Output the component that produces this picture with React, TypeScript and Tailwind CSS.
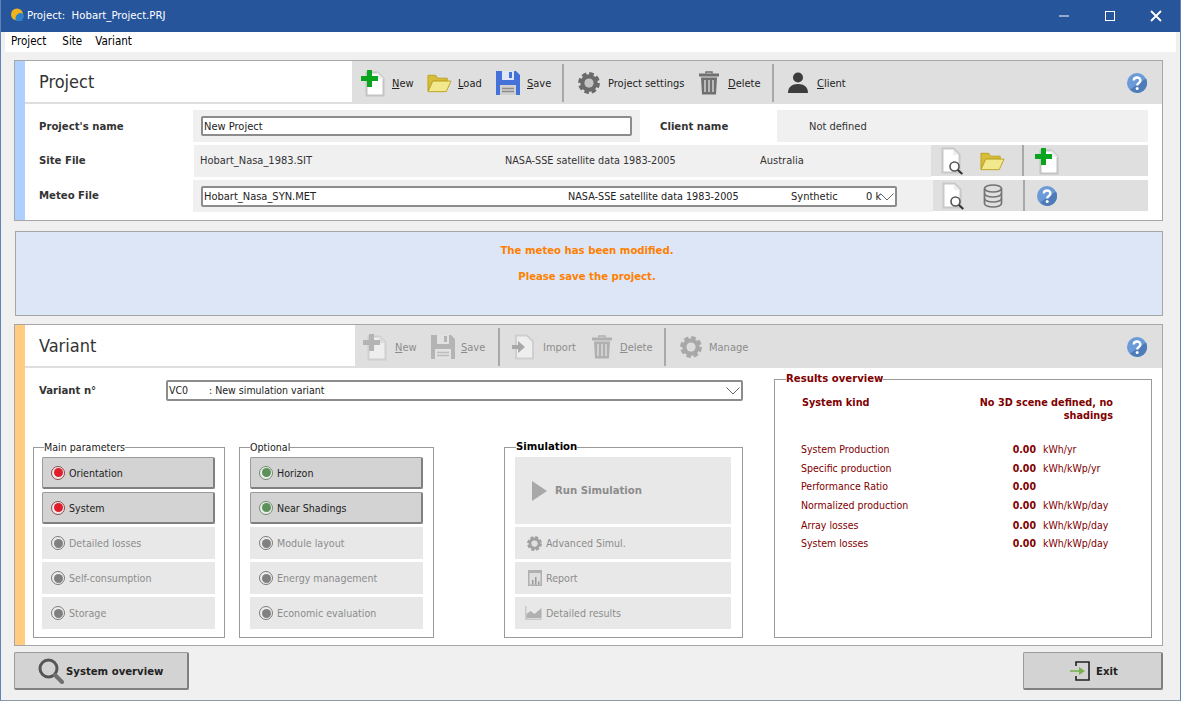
import type { ReactNode } from "react";

const font = "font-['DejaVu_Sans_Condensed','DejaVu_Sans',sans-serif]";

function NewDocIcon({ muted = false }: { muted?: boolean }) {
  const plus = muted ? "#b4b4b4" : "#0aa51e";
  return (
    <svg width="26" height="28" viewBox="0 0 26 28" aria-hidden>
      <path d="M5.500 3.500h11l6 6v17h-17z" fill={muted ? "#eeeeee" : "#ffffff"} stroke={muted ? "#cfcfcf" : "#c4c4c4"} strokeWidth="2" />
      <path d="M16 3v7h7" fill={muted ? "#dcdcdc" : "#eeeeee"} />
      <path d="M6 1h5v6h6v5h-6v6H6v-6H0V7h6z" fill={plus} />
    </svg>
  );
}

function FolderIcon() {
  return (
    <svg width="25" height="20" viewBox="0 0 26 20" aria-hidden>
      <path d="M1 18V2h8l2 3h10v3H6L1 18z" fill="#d8bd3a" stroke="#bda21f" />
      <path d="M1 19l5-11h19l-5 11z" fill="#f2e88e" stroke="#bda21f" />
    </svg>
  );
}

function SaveIcon({ muted = false }: { muted?: boolean }) {
  return (
    <svg width="26" height="28" viewBox="0 0 26 28" aria-hidden>
      <path d="M1 2h20l4 4v20H1z" fill={muted ? "#b4b4b4" : "#4472d8"} />
      <rect x="7" y="2" width="12" height="9" fill={muted ? "#e2e2e2" : "#dfe6f7"} />
      <rect x="14" y="3" width="3" height="6" fill={muted ? "#b4b4b4" : "#4472d8"} />
      <rect x="5" y="16" width="16" height="10" fill={muted ? "#e2e2e2" : "#d0d0d0"} />
      <path d="M7 19.500h12M7 22.500h12" stroke={muted ? "#bcbcbc" : "#8c8c8c"} strokeWidth="1.400" />
    </svg>
  );
}

function GearIcon({ size = 22, color = "#6a6a6a", hole = "#c4c4c4" }: { size?: number; color?: string; hole?: string }) {
  return (
    <svg width={size} height={size} viewBox="0 0 24 24" aria-hidden>
      <circle cx="12" cy="12" r="10.200" fill="none" stroke={color} strokeWidth="3.400" strokeDasharray="5 3" />
      <circle cx="12" cy="12" r="7" fill="none" stroke={color} strokeWidth="5" />
      <circle cx="12" cy="12" r="5" fill={hole} />
    </svg>
  );
}

function TrashIcon({ muted = false }: { muted?: boolean }) {
  const c = muted ? "#b0b0b0" : "#707070";
  return (
    <svg width="20" height="24" viewBox="0 0 20 24" aria-hidden>
      <path d="M7 2.500V1h6v1.500" fill="none" stroke={c} strokeWidth="1.500" />
      <rect x="0" y="2.500" width="20" height="3" fill={c} />
      <path d="M2 6.500h16l-1 17H3z" fill={c} />
      <path d="M6 9v12M10 9v12M14 9v12" stroke="#e2e2e2" strokeWidth="1.300" />
    </svg>
  );
}

function PersonIcon() {
  return (
    <svg width="22" height="22" viewBox="0 0 22 22" aria-hidden>
      <circle cx="11" cy="5.500" r="5" fill="#3c3c3c" />
      <path d="M1 21c0-6 4-9 10-9s10 3 10 9z" fill="#3c3c3c" />
    </svg>
  );
}

function HelpIcon() {
  return (
    <svg width="20" height="20" viewBox="0 0 20 20" aria-hidden>
      <circle cx="10" cy="10" r="10" fill="#6a9ad8" />
      <path d="M10 20A10 10 0 0 0 19 5.500L3 16.500A10 10 0 0 0 10 20z" fill="#4f7cb8" />
      <path d="M6.800 7.500C6.800 3.500 13.400 3.500 13.400 7.500c0 2.500-3.200 2.500-3.200 5" fill="none" stroke="#ffffff" strokeWidth="2.400" />
      <circle cx="10.200" cy="15.500" r="1.500" fill="#ffffff" />
    </svg>
  );
}

function DocSearchIcon() {
  return (
    <svg width="24" height="28" viewBox="0 0 24 28" aria-hidden>
      <path d="M1.500 1.500h11l6 6v18h-17z" fill="#ffffff" stroke="#c8c8c8" strokeWidth="2" />
      <path d="M12 2v6h6" fill="#eeeeee" />
      <circle cx="13.500" cy="19.500" r="4.500" fill="#ffffff" stroke="#555555" strokeWidth="1.600" />
      <path d="M16.800 23l4.500 4" stroke="#333333" strokeWidth="2.200" />
    </svg>
  );
}

function DatabaseIcon() {
  return (
    <svg width="20" height="24" viewBox="0 0 20 24" fill="none" stroke="#737373" strokeWidth="1.700" aria-hidden>
      <ellipse cx="10" cy="4.500" rx="8.500" ry="3.500" />
      <path d="M1.500 4.500v15c0 2 3.800 3.500 8.500 3.500s8.500-1.500 8.500-3.500v-15" />
      <path d="M1.500 9.500c0 2 3.800 3.500 8.500 3.500s8.500-1.500 8.500-3.500M1.500 14.500c0 2 3.800 3.500 8.500 3.500s8.500-1.500 8.500-3.500" />
    </svg>
  );
}

function ImportIcon() {
  return (
    <svg width="24" height="26" viewBox="0 0 24 26" aria-hidden>
      <path d="M5 1.500h11l6 6v17H5z" fill="#eeeeee" stroke="#cfcfcf" strokeWidth="2" />
      <path d="M1 11h6V7l7 6-7 6v-4H1z" fill="#a8a8a8" />
    </svg>
  );
}

function LargeSearchIcon() {
  return (
    <svg width="26" height="26" viewBox="0 0 26 26" aria-hidden>
      <circle cx="10.500" cy="10.500" r="8.500" fill="none" stroke="#555555" strokeWidth="3" />
      <path d="M17 17l7 7" stroke="#707070" strokeWidth="4" strokeLinecap="round" />
    </svg>
  );
}

function ExitIcon() {
  return (
    <svg width="20" height="20" viewBox="0 0 20 20" aria-hidden>
      <path d="M6 5V1h13v18H6v-4" fill="none" stroke="#222222" strokeWidth="1.600" />
      <path d="M0 9.200h9V6l6 4-6 4v-3.200H0z" fill="#78b04a" />
    </svg>
  );
}

function ReportIcon() {
  return (
    <svg width="14" height="16" viewBox="0 0 14 16" aria-hidden>
      <rect width="14" height="16" fill="#b0b0b0" />
      <rect x="1.500" y="3" width="11" height="11.500" fill="#dedede" />
      <path d="M4 14.500V10h1.500v4.500zM7 14.500V7h1.500v7.500zM10 14.500v-3h1.500v3z" fill="#9a9a9a" />
    </svg>
  );
}

function ChartIcon() {
  return (
    <svg width="17" height="14" viewBox="0 0 17 14" aria-hidden>
      <path d="M0 0v14h17v-1.500H1.500V0z" fill="#c8c8c8" />
      <path d="M1.500 8l4-3 4 3 7-6v10H1.500z" fill="#b0b0b0" />
    </svg>
  );
}

function AppIcon() {
  return (
    <svg width="14" height="14" viewBox="0 0 14 14" aria-hidden>
      <circle cx="7" cy="6.500" r="6" fill="#f2b41c" />
      <path d="M6 13c-1.500-3 0-7 4-8 3 0 4 2 4 3.500L12 13z" fill="#2f80c8" />
    </svg>
  );
}

function ToolItem({ className, icon, children, muted = false, gap = "gap-[8px]" }: { className: string; icon: ReactNode; children: ReactNode; muted?: boolean; gap?: string }) {
  return (
    <div className={`flex items-center ${gap} ${className}`}>
      {icon}
      <span className={`text-[11px] whitespace-nowrap translate-y-[2px] ${muted ? "text-[#8c8c8c]" : "text-[#222222]"}`}>{children}</span>
    </div>
  );
}

function Divider() {
  return <div className="w-[2px] h-[38px] bg-[#a8a8a8] shrink-0" />;
}

function Chevron() {
  return (
    <svg width="14" height="8" viewBox="0 0 14 8" fill="none" stroke="#666666" aria-hidden>
      <path d="M0.500 0.500L7 7l6.500-6.500" />
    </svg>
  );
}

function Led({ color, ring = "border-[#7a7a7a]" }: { color: string; ring?: string }) {
  return (
    <span className={`w-[14px] h-[14px] rounded-full border bg-[#eeeeee] flex items-center justify-center shrink-0 ${ring}`}>
      <span className={`w-[9px] h-[9px] rounded-full ${color}`} />
    </span>
  );
}

function ParamButton({ label, led }: { label: string; led?: "red" | "green" }) {
  if (led) {
    return (
      <div className="h-[32px] shrink-0 flex items-center pl-[8px] gap-[4px] bg-[#d3d3d3] border border-[#9a9a9a] border-r-2 border-b-2 border-r-[#808080] border-b-[#808080] rounded-[2px] text-[10.600px] text-[#222222]">
        <Led color={led === "red" ? "bg-[#e01e2b]" : "bg-[#5a925a]"} ring={led === "red" ? "border-[#8a4a4a]" : "border-[#6f8a6f]"} />
        <span className="translate-y-[1px]">{label}</span>
      </div>
    );
  }
  return (
    <div className="h-[32px] shrink-0 flex items-center pl-[9px] gap-[4px] bg-[#e8e8e8] text-[10.600px] text-[#8c8c8c]">
      <Led color="bg-[#808080]" />
      <span className="translate-y-[1px]">{label}</span>
    </div>
  );
}

function SimButton({ icon, label }: { icon: ReactNode; label: string }) {
  return (
    <div className="h-[32px] shrink-0 flex items-center bg-[#e8e8e8] text-[10.600px] text-[#8c8c8c]">
      <span className="w-[27px] flex justify-end">{icon}</span>
      <span className="ml-[4px] translate-y-[1px]">{label}</span>
    </div>
  );
}

function GroupBox({ title, className, titleClass, children }: { title: string; className: string; titleClass: string; children: ReactNode }) {
  return (
    <div className={`relative border border-[#9a9a9a] ${className}`}>
      <span className={`absolute -top-[8px] bg-white leading-[14px] ${titleClass}`}>{title}</span>
      {children}
    </div>
  );
}

const results = [
  { label: "System Production", value: "0.00", unit: "kWh/yr", h: "h-[19px]" },
  { label: "Specific production", value: "0.00", unit: "kWh/kWp/yr", h: "h-[19px]" },
  { label: "Performance Ratio", value: "0.00", unit: "", h: "h-[18px]" },
  { label: "Normalized production", value: "0.00", unit: "kWh/kWp/day", h: "h-[20px]" },
  { label: "Array losses", value: "0.00", unit: "kWh/kWp/day", h: "h-[19px]" },
  { label: "System losses", value: "0.00", unit: "kWh/kWp/day", h: "h-[18px]" },
];

export default function App() {
  return (
    <div className={`w-[1181px] h-[701px] overflow-hidden bg-[#f0f0f0] border-x border-b border-x-[#5f82b8] border-b-[#8f9aa8] ${font}`}>
      {/* Title bar */}
      <div className="h-[32px] -mx-px bg-[#26559b] flex items-center text-white">
        <span className="ml-[10px] -mt-[3px]"><AppIcon /></span>
        <span className="ml-[3px] text-[11.300px] whitespace-pre">Project:  Hobart_Project.PRJ</span>
        <div className="ml-auto flex items-center">
          <svg width="12" height="12" viewBox="0 0 12 12" className="mr-[34px]" aria-hidden><path d="M1 6h10" stroke="#fff" strokeWidth="1" /></svg>
          <svg width="12" height="12" viewBox="0 0 12 12" className="mr-[33px]" aria-hidden><rect x="1.500" y="1.500" width="9" height="9" fill="none" stroke="#fff" strokeWidth="1" /></svg>
          <svg width="14" height="14" viewBox="0 0 14 14" className="mr-[18px]" aria-hidden><path d="M2 2l10 10M12 2L2 12" stroke="#fff" strokeWidth="1.800" /></svg>
        </div>
      </div>

      {/* Menu */}
      <div className="h-[20px] mx-[4px] bg-white flex items-center pl-[6px] text-[11.500px] text-black">
        <span>Project</span>
        <span className="ml-[16px]">Site</span>
        <span className="ml-[13px]">Variant</span>
      </div>

      {/* Project panel */}
      <section className="mt-[8px] ml-[13px] w-[1149px] h-[161px] border border-[#a6a6a6] bg-white flex">
        <div className="w-[10px] bg-[#afcfff]" />
        <div className="flex-1 min-w-0">
          <div className="h-[43px] flex">
            <div className="w-[327px] h-[43px] border-b-2 border-[#dedede] pl-[14px] flex items-center text-[18px] text-[#333333]">Project</div>
            <div className="flex-1 bg-[#dfdfdf] flex items-center pl-[9px]">
              <ToolItem gap="gap-[5px]" className="w-[66px]" icon={<NewDocIcon />}><u>N</u>ew</ToolItem>
              <ToolItem gap="gap-[6px]" className="w-[68px]" icon={<FolderIcon />}><u>L</u>oad</ToolItem>
              <ToolItem gap="gap-[6px]" className="w-[67px]" icon={<SaveIcon />}><u>S</u>ave</ToolItem>
              <Divider />
              <ToolItem className="w-[121px] ml-[14px]" icon={<GearIcon />}>Project settings</ToolItem>
              <ToolItem gap="gap-[9px]" className="w-[73px]" icon={<TrashIcon />}><u>D</u>elete</ToolItem>
              <Divider />
              <ToolItem className="w-[60px] ml-[13px]" icon={<PersonIcon />}><u>C</u>lient</ToolItem>
              <span className="ml-auto mr-[15px]"><HelpIcon /></span>
            </div>
          </div>
          <div className="pt-[6px] pr-[14px] flex flex-col gap-[3px] text-[11px] text-[#333333]">
            <div className="h-[32px] flex items-center">
              <div className="w-[168px] pl-[14px] pt-[2px] font-bold text-[11.250px]">Project's name</div>
              <div className="w-[447px] h-full bg-[#f0f0f0] flex items-center pl-[8px]">
                <div className="w-[431px] h-[20px] bg-white border-2 border-[#8c8c8c] rounded-[2px] pl-[1px] pt-[2px] flex items-center text-[#222222]">New Project</div>
              </div>
              <div className="w-[137px] pl-[20px] pt-[2px] font-bold text-[11.250px]">Client name</div>
              <div className="flex-1 h-full bg-[#f0f0f0] flex items-center pl-[32px] pt-[2px]">Not defined</div>
            </div>
            <div className="h-[32px] flex items-center">
              <div className="w-[169px] pl-[14px] font-bold text-[11.250px]">Site File</div>
              <div className="w-[737px] h-full bg-[#f0f0f0] flex items-center pl-[6px]">
                <span className="w-[305px]">Hobart_Nasa_1983.SIT</span>
                <span className="w-[255px] text-[10.750px]">NASA-SSE satellite data 1983-2005</span>
                <span>Australia</span>
              </div>
              <div className="flex-1 h-[31px] self-start bg-[#dfdfdf] flex items-center">
                <span className="ml-[10px] w-[39px]"><DocSearchIcon /></span>
                <span className="w-[42px]"><FolderIcon /></span>
                <div className="w-[2px] h-full bg-[#a8a8a8]" />
                <span className="ml-[11px]"><NewDocIcon /></span>
              </div>
            </div>
            <div className="h-[32px] flex items-center">
              <div className="w-[168px] pl-[14px] font-bold text-[11.250px]">Meteo File</div>
              <div className="w-[740px] h-full bg-[#f0f0f0] flex items-center pl-[8px]">
                <div className="w-[696px] h-[21px] bg-white border-2 border-[#8c8c8c] rounded-[2px] pl-[1px] pt-[2px] flex items-center text-[#222222]">
                  <span className="w-[364px]">Hobart_Nasa_SYN.MET</span>
                  <span className="w-[223px] text-[10.750px]">NASA-SSE satellite data 1983-2005</span>
                  <span className="w-[75px]">Synthetic</span>
                  <span className="w-[14px] whitespace-nowrap">0 k</span>
                  <Chevron />
                </div>
              </div>
              <div className="flex-1 h-[31px] self-start bg-[#dfdfdf] flex items-center">
                <span className="ml-[9px] w-[41px]"><DocSearchIcon /></span>
                <span className="w-[40px]"><DatabaseIcon /></span>
                <div className="w-[2px] h-full bg-[#a8a8a8]" />
                <span className="ml-[12px]"><HelpIcon /></span>
              </div>
            </div>
          </div>
        </div>
      </section>

      {/* Message */}
      <div className="mt-[10px] ml-[14px] w-[1148px] h-[85px] border border-[#a6a6a6] bg-[#dde6f6] flex flex-col items-center pt-[12px] pr-[4px] gap-[12px] text-[11.250px] font-bold text-[#ff7f00] leading-[14px]">
        <span>The meteo has been modified.</span>
        <span>Please save the project.</span>
      </div>

      {/* Variant panel */}
      <section className="mt-[8px] ml-[13px] w-[1149px] h-[322px] border border-[#a6a6a6] bg-white flex">
        <div className="w-[10px] bg-[#ffcc80]" />
        <div className="flex-1 min-w-0">
          <div className="h-[43px] flex">
            <div className="w-[330px] h-[43px] border-b-2 border-[#dedede] pl-[14px] flex items-center text-[18px] text-[#333333]">Variant</div>
            <div className="flex-1 bg-[#dfdfdf] flex items-center pl-[8px]">
              <ToolItem muted gap="gap-[6px]" className="w-[67px]" icon={<NewDocIcon muted />}><u>N</u>ew</ToolItem>
              <ToolItem muted gap="gap-[5px]" className="w-[68px]" icon={<SaveIcon muted />}><u>S</u>ave</ToolItem>
              <Divider />
              <ToolItem muted className="w-[81px] ml-[11px]" icon={<ImportIcon />}>Import</ToolItem>
              <ToolItem muted className="w-[72px]" icon={<TrashIcon muted />}><u>D</u>elete</ToolItem>
              <Divider />
              <ToolItem muted gap="gap-[7px]" className="w-[70px] ml-[14px]" icon={<GearIcon color="#a8a8a8" hole="#dcdcdc" />}>Manage</ToolItem>
              <span className="ml-auto mr-[15px]"><HelpIcon /></span>
            </div>
          </div>
          <div className="flex pt-[12px] pl-[8px]">
            <div className="w-[741px]">
              <div className="flex items-center h-[21px] text-[10.500px]">
                <div className="w-[133px] pl-[6px] pt-[2px] font-bold text-[11.250px] text-[#333333]">Variant n°</div>
                <div className="w-[577px] h-[21px] bg-white border-2 border-[#8c8c8c] rounded-[2px] pl-[1px] pr-[1px] flex items-center justify-between text-[#222222]">
                  <span className="whitespace-pre">VC0       : New simulation variant</span>
                  <Chevron />
                </div>
              </div>
              <div className="flex mt-[46px]">
                <GroupBox title="Main parameters" className="w-[192px] h-[191px] pl-[8px] pr-[9px] pt-[9px] flex flex-col gap-[3px]" titleClass="left-[10px] text-[10.600px] text-[#222222]">
                  <ParamButton label="Orientation" led="red" />
                  <ParamButton label="System" led="red" />
                  <ParamButton label="Detailed losses" />
                  <ParamButton label="Self-consumption" />
                  <ParamButton label="Storage" />
                </GroupBox>
                <GroupBox title="Optional" className="ml-[14px] w-[195px] h-[191px] px-[10px] pt-[9px] flex flex-col gap-[3px]" titleClass="left-[10px] text-[10.600px] text-[#222222]">
                  <ParamButton label="Horizon" led="green" />
                  <ParamButton label="Near Shadings" led="green" />
                  <ParamButton label="Module layout" />
                  <ParamButton label="Energy management" />
                  <ParamButton label="Economic evaluation" />
                </GroupBox>
                <GroupBox title="Simulation" className="ml-[70px] w-[239px] h-[191px] pl-[10px] pr-[11px] pt-[9px] flex flex-col gap-[3px]" titleClass="left-[11px] text-[11.250px] text-black font-bold">
                  <div className="h-[67px] shrink-0 bg-[#e8e8e8] flex items-center pl-[17px] text-[11.250px] font-bold text-[#8c8c8c]">
                    <svg width="15" height="20" viewBox="0 0 15 20" aria-hidden><path d="M0 0l15 10L0 20z" fill="#a8a8a8" /></svg>
                    <span className="ml-[8px] translate-y-[1px]">Run Simulation</span>
                  </div>
                  <SimButton icon={<GearIcon size={15} color="#a0a0a0" hole="#e0e0e0" />} label="Advanced Simul." />
                  <SimButton icon={<ReportIcon />} label="Report" />
                  <SimButton icon={<ChartIcon />} label="Detailed results" />
                </GroupBox>
              </div>
            </div>
            <GroupBox title="Results overview" className="-mt-px w-[378px] h-[259px] text-[#800000]" titleClass="left-[11px] -top-[7px] text-[11.250px] text-[#800000] font-bold">
              <div className="flex justify-between pl-[27px] pr-[38px] pt-[16px] text-[10.800px] font-bold leading-[13px]">
                <span>System kind</span>
                <span className="w-[150px] text-right">No 3D scene defined, no shadings</span>
              </div>
              <div className="mt-[18px] pl-[26px] text-[10.500px]">
                {results.map((r) => (
                  <div key={r.label} className={`flex items-center ${r.h}`}>
                    <span className="w-[210px]">{r.label}</span>
                    <span className="w-[25px] text-right font-bold">{r.value}</span>
                    <span className="ml-[7px]">{r.unit}</span>
                  </div>
                ))}
              </div>
            </GroupBox>
          </div>
        </div>
      </section>

      {/* Footer buttons */}
      <div className="mt-[6px] ml-[13px] w-[1149px] flex justify-between">
        <div className="w-[175px] h-[38px] flex items-center pl-[23px] gap-[2px] bg-[#d3d3d3] border border-[#9a9a9a] border-r-2 border-b-2 border-r-[#808080] border-b-[#808080] rounded-[2px] text-[11.250px] font-bold text-[#222222]">
          <LargeSearchIcon />
          <span className="translate-y-[2px]">System overview</span>
        </div>
        <div className="w-[140px] h-[38px] flex items-center pl-[46px] gap-[6px] bg-[#d3d3d3] border border-[#9a9a9a] border-r-2 border-b-2 border-r-[#808080] border-b-[#808080] rounded-[2px] text-[11.250px] font-bold text-[#222222]">
          <ExitIcon />
          <span className="translate-y-[2px]">Exit</span>
        </div>
      </div>
    </div>
  );
}
